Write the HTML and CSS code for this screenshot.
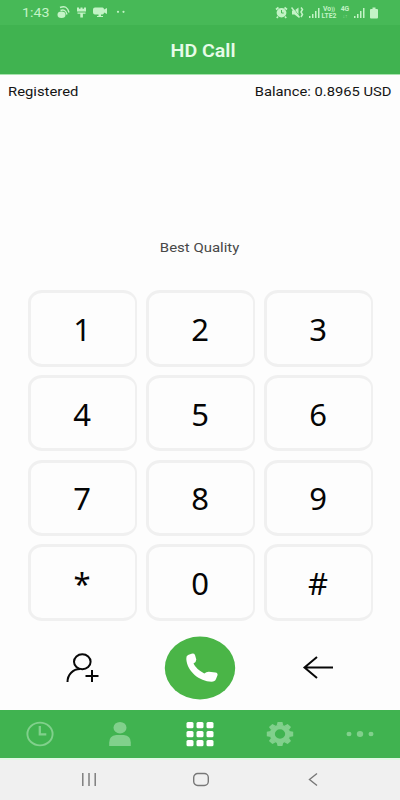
FILE: index.html
```html
<!DOCTYPE html>
<html lang="en">
<head>
<meta charset="utf-8">
<title>HD Call</title>
<link rel="stylesheet" href="styles.css">
</head>
<body>
<div class="phone">
  <div class="status">
    <span class="time">1:43</span>
    <svg class="status-left" width="74" height="16" viewBox="0 0 74 16" fill="currentColor">
      <ellipse cx="4.500" cy="10.700" rx="4" ry="3.200"/><path d="M3 3.500q7-3 9 5M3.500 6.500q5-2 6.500 4" fill="none" stroke="currentColor" stroke-width="1.400"/>
      <path d="M20 3.500h2v1.200h1.500V3.500h2v1.200H27V3.500h2v4h-9zM20.500 8.500h8v1.300h-2.600V13.500h-2.600V9.800h-2.800z"/>
      <path d="M38 3.500h7.500q1.500 0 1.500 2l3-1.500v6l-3-1.500q0 2-1.500 2H44v1.500h2v1h-6v-1h1.500V10.500H38q-2 0-2-2v-3q0-2 2-2z"/>
      <circle cx="61" cy="7.800" r="1.100"/><circle cx="66.500" cy="7.800" r="1.100"/>
    </svg>
    <span class="grow"></span>
    <svg class="alarm" width="13" height="13" viewBox="0 0 13 13"><ellipse cx="6.500" cy="6.700" rx="4.900" ry="4.700" fill="currentColor"/><path d="M1 3.500 3.500 1.500M12 3.500 9.500 1.500M3 10.500 1.800 12M10 10.500l1.200 1.500" stroke="currentColor" stroke-width="1.700"/><path d="M6.500 4v3h2.200" stroke="#47b957" fill="none"/></svg>
    <svg class="mute" width="13" height="13" viewBox="0 0 13 13"><path d="M1 4.500h2.500L7.500 1.500v10L3.500 8.500H1z" fill="currentColor"/><path d="M1.500 1l7 9.500" stroke="#47b957" stroke-width="1"/><path d="M.5 1.500l8 10M10 1.500l1.500 2L10 6l1.500 2.500L10 11" stroke="currentColor" stroke-width="1.500" fill="none"/></svg>
    <svg class="signal" width="11" height="12" viewBox="0 0 11 12" fill="currentColor"><path d="M0 9h1.500v2H0zM3 7h1.500v4H3zM6 4h1.500v7H6zM9 1h1.500v10H9z"/></svg>
    <span class="net lte"><b>Vo<i>))</i></b><b>LTE2</b></span>
    <span class="net four"><b>4G</b><b class="arrows">↓↑</b></span>
    <svg class="signal" width="11" height="12" viewBox="0 0 11 12" fill="currentColor"><path d="M0 9h1.500v2H0zM3 7h1.500v4H3zM6 4h1.500v7H6zM9 1h1.500v10H9z"/></svg>
    <svg class="battery" width="8" height="12" viewBox="0 0 8 12" fill="currentColor"><path d="M2.500.5h3V2H7q1 0 1 1v7.500q0 1-1 1H1q-1 0-1-1V3q0-1 1-1h1.500z"/></svg>
  </div>
  <header class="title"><span>HD Call</span></header>
  <div class="info"><span class="registered">Registered</span><span class="balance">Balance: 0.8965 USD</span></div>
  <div class="quality"><span>Best Quality</span></div>
  <div class="keys">
    <button><span>1</span></button><button><span>2</span></button><button><span>3</span></button>
    <button><span>4</span></button><button><span>5</span></button><button><span>6</span></button>
    <button><span>7</span></button><button><span>8</span></button><button><span>9</span></button>
    <button><span>*</span></button><button><span>0</span></button><button><span>#</span></button>
  </div>
  <div class="actions">
    <svg width="36" height="34" viewBox="0 0 36 34" fill="none" stroke="#080808" stroke-width="2"><ellipse cx="18.300" cy="10.800" rx="8.300" ry="7.500"/><path d="M3.500 31C3.500 23.500 9 18 16 18M21.500 25H34.500M28 19v12"/></svg>
    <svg width="72" height="64" viewBox="0 0 72 64"><ellipse cx="36" cy="32" rx="35.200" ry="31.500" fill="#4ab547"/><path d="M22.300 23Q22 20 24 19L27.500 17.800Q30 17 31 19L32.300 23.500Q32.500 25.500 29.500 27.500Q32 33 40.300 37.500Q42.500 35.500 45 35.700L51.500 36.500Q54 37 53.500 39.200L52 43Q51 45.700 47.500 45.700C35.500 45.500 23 35.500 22.300 23Z" fill="#fff"/></svg>
    <svg width="36" height="34" viewBox="0 0 36 34" fill="none" stroke="#080808" stroke-width="2"><path d="M33 16.500H4.500M17 6 4.500 16.500 17 27"/></svg>
  </div>
  <nav class="tabs">
    <svg width="28" height="26" viewBox="0 0 28 26" fill="none" stroke="#81d08c"><ellipse cx="14" cy="13" rx="12.600" ry="11.400" stroke-width="1.900"/><path d="M13.800 5v8.300h6.500" stroke-width="2.300"/></svg>
    <svg width="28" height="26" viewBox="0 0 28 26" fill="#81d08c"><ellipse cx="14" cy="6.700" rx="6.500" ry="5.800"/><path d="M3.200 25v-3.500q0-7 7-7.500h7.600q7 .5 7 7.500V25z"/></svg>
    <svg width="28" height="26" viewBox="0 0 28 26" fill="#fff"><rect x=".5" y="1" width="7" height="6.200" rx="1.500"/><rect x="10.500" y="1" width="7" height="6.200" rx="1.500"/><rect x="20.500" y="1" width="7" height="6.200" rx="1.500"/><rect x=".5" y="10" width="7" height="6.200" rx="1.500"/><rect x="10.500" y="10" width="7" height="6.200" rx="1.500"/><rect x="20.500" y="10" width="7" height="6.200" rx="1.500"/><rect x=".5" y="19" width="7" height="6.200" rx="1.500"/><rect x="10.500" y="19" width="7" height="6.200" rx="1.500"/><rect x="20.500" y="19" width="7" height="6.200" rx="1.500"/></svg>
    <svg width="28" height="26" viewBox="0 0 28 26"><g transform="translate(14 13) scale(1.1 1)" fill="#81d08c"><path fill-rule="evenodd" d="M0-9.300A9.300 9.300 0 1 1 0 9.300 9.300 9.300 0 1 1 0-9.300ZM0-4.700A4.700 4.700 0 1 0 0 4.700 4.700 4.700 0 1 0 0-4.700Z"/><path id="tooth" d="M-3-8.500-2.200-12H2.200L3-8.500Z"/><use href="#tooth" transform="rotate(45)"/><use href="#tooth" transform="rotate(90)"/><use href="#tooth" transform="rotate(135)"/><use href="#tooth" transform="rotate(180)"/><use href="#tooth" transform="rotate(225)"/><use href="#tooth" transform="rotate(270)"/><use href="#tooth" transform="rotate(315)"/></g></svg>
    <svg width="28" height="26" viewBox="0 0 28 26" fill="#81d08c"><ellipse cx="3" cy="13" rx="2.500" ry="2.200"/><ellipse cx="14" cy="13" rx="3.200" ry="3"/><ellipse cx="25" cy="13" rx="2.500" ry="2.200"/></svg>
  </nav>
  <div class="system">
    <svg width="18" height="16" viewBox="0 0 18 16" fill="none" stroke="#777" stroke-width="1.400"><path d="M2.800 1v13M9 1v13M15.200 1v13"/></svg>
    <svg width="18" height="16" viewBox="0 0 18 16" fill="none" stroke="#777" stroke-width="1.400"><rect x="1.700" y="1.500" width="14.600" height="12" rx="4"/></svg>
    <svg width="18" height="16" viewBox="0 0 18 16" fill="none" stroke="#777" stroke-width="1.400"><path d="M13 1.500 5.500 7.500 13 13.500"/></svg>
  </div>
</div>
</body>
</html>
```
FILE: styles.css
```css
* { box-sizing: border-box; }
body { margin: 0; font-family: Roboto, sans-serif; }
.phone { width: 400px; height: 800px; display: flex; flex-direction: column; background: #fdfdfd; overflow: hidden; }
.phone svg { flex: none; display: block; }
.status { height: 25px; flex: none; display: flex; align-items: center; padding: 0 21px 0 22px; background: #47b957; color: #c3f3c6; }
.time { width: 35px; font-size: 12.5px; line-height: 25px; transform: scaleX(1.14); transform-origin: left; white-space: nowrap; }
.status-left { margin-top: -1px; }
.grow { flex: 1; }
.alarm { margin-right: 3px; }
.mute { margin-right: 5px; }
.net { display: flex; flex-direction: column; font-size: 6.8px; line-height: 6.5px; }
.net b { display: block; font-weight: 700; white-space: nowrap; }
.net i { font-style: normal; font-size: 5.500px; }
.lte { width: 16px; margin: 0 3px 0 1px; align-items: center; }
.four { width: 10px; margin-right: 4px; align-items: center; }
.four .arrows { font-size: 5px; opacity: .6; }
.battery { margin: 0 1px 0 5px; }
.title { height: 50px; flex: none; display: flex; align-items: center; justify-content: center; padding: 2px 0 0 7px; background: #40b350; color: #e7fbe8; border-bottom: 1px solid #a8e3ae; font-size: 17.500px; font-weight: 600; }
.title span { transform: scaleX(1.12); }
.info { height: 32px; flex: none; display: flex; justify-content: space-between; align-items: center; padding: 0 8px; font-size: 13px; color: #151515; }
.info .registered { transform: scaleX(1.14); transform-origin: left; }
.info .balance { transform: scaleX(1.135); transform-origin: right; }
.quality { height: 183px; flex: none; padding-top: 132px; text-align: center; font-size: 13px; line-height: 17px; color: #484848; }
.quality span { display: inline-block; transform: scaleX(1.15); }
.keys { height: 331px; flex: none; display: grid; grid-template-columns: repeat(3, 1fr); grid-template-rows: repeat(4, 1fr); gap: 8.300px 9px; padding: 0 27.500px; }
.keys button { display: flex; align-items: center; justify-content: center; padding: 1px 1px 0 0; border: 2.500px solid #f0f0f0; border-width: 3px 2px 3px 3px; border-radius: 14px / 12.500px; background: #fdfdfd; color: #050505; font-family: "Noto Sans", sans-serif; font-size: 31px; line-height: 40px; }
.actions { height: 89px; flex: none; display: grid; grid-template-columns: repeat(3, 1fr); column-gap: 9px; place-items: center; padding: 4px 27.500px 0; }
.tabs { height: 48px; flex: none; display: grid; grid-template-columns: repeat(5, 1fr); place-items: center; background: #40b350; }
.system { height: 42px; flex: none; display: flex; align-items: center; justify-content: center; gap: 94px; padding-left: 1px; border-top: 2px solid #e1f8e4; background: #f0f0f0; }
```
